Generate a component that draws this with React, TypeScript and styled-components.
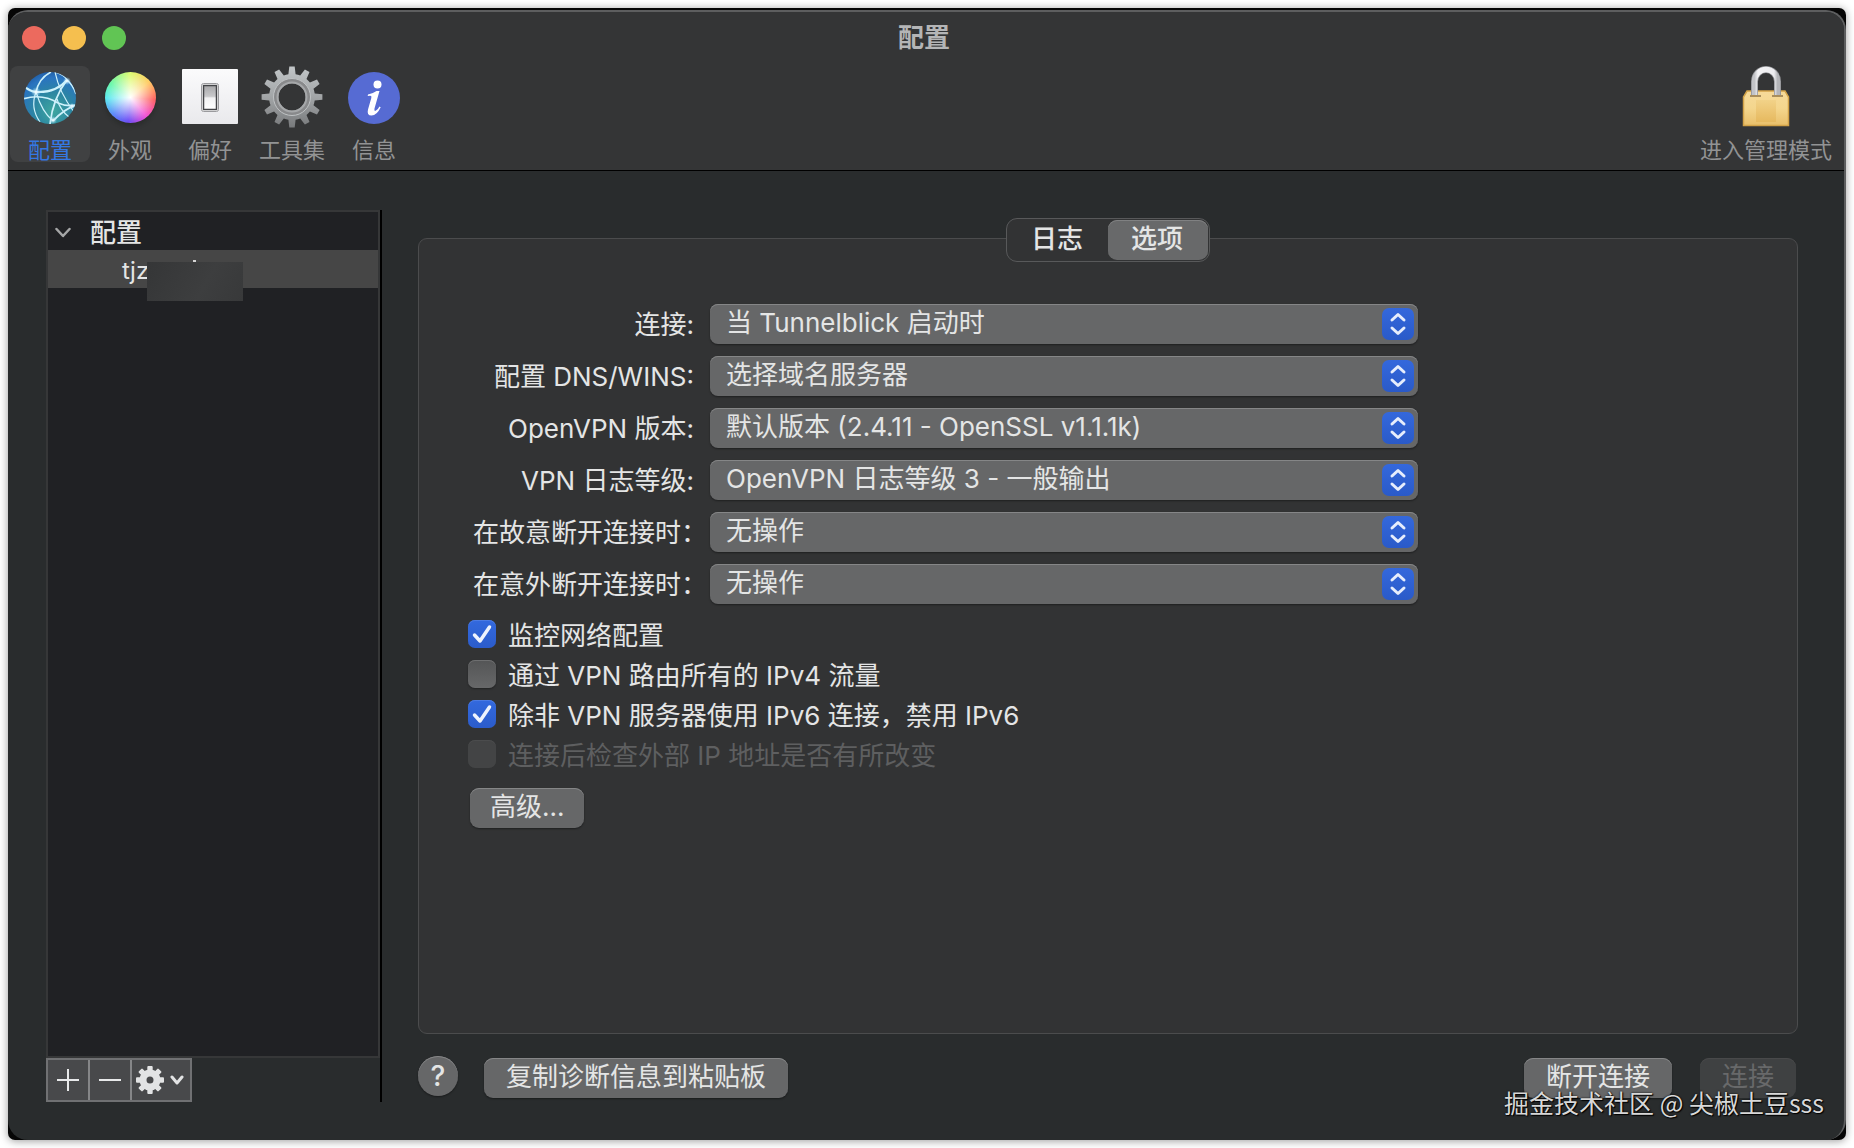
import React, { useState } from "react";
import styled, { createGlobalStyle, css } from "styled-components";

const GlobalStyle = createGlobalStyle`
  *, *::before, *::after { box-sizing: border-box; }
  body {
    margin: 0;
    background: #fff;
    font-family: Inter, "Noto Sans CJK SC", sans-serif;
    font-size: 26px;
    line-height: 36px;
    color: #e4e5e5;
  }
  button, select, input { font: inherit; color: inherit; }
`;

const Page = styled.div`
  display: flex;
  min-height: 100vh;
  padding: 8px;
`;

const Backdrop = styled.div`
  display: flex;
  flex: 1;
  position: relative;
  padding-top: 2px;
  border-radius: 7px;
  background: #060606;
  box-shadow: 0 1px 8px rgba(0, 0, 0, 0.4);
`;

const Window = styled.div`
  display: flex;
  flex-direction: column;
  flex: 1;
  min-width: 0;
  border: 0 solid #5d5e5f;
  border-width: 2px 2px 0 0;
  border-radius: 20px;
  background: #292c2d;
  overflow: hidden;
`;

const Header = styled.header`
  padding-bottom: 8px;
  border-bottom: 1px solid #000;
  background: #343536;
`;

const TitleBar = styled.div`
  display: grid;
  grid-template-columns: 1fr auto 1fr;
  align-items: center;
  height: 52px;
  margin-bottom: 2px;
  padding: 0 18px 0 14px;
`;

const TrafficLights = styled.div`
  display: flex;
  gap: 16px;
`;

const Light = styled.button<{ $color: string }>`
  width: 24px;
  height: 24px;
  padding: 0;
  border: 0;
  border-radius: 50%;
  background: ${(p) => p.$color};
`;

const Title = styled.h1`
  margin: 0;
  font-size: 26px;
  font-weight: 600;
  line-height: 52px;
  color: #b4b5b6;
`;

const Toolbar = styled.nav`
  display: flex;
  padding: 0 2px;
`;

const ToolItem = styled.button<{ $active?: boolean; $wide?: boolean; $end?: boolean }>`
  display: flex;
  flex-direction: column;
  align-items: center;
  gap: 14px;
  width: ${(p) => (p.$wide ? 84 : 80)}px;
  height: 96px;
  padding: 0;
  border: 0;
  border-radius: 8px;
  background: ${(p) => (p.$active ? "#404142" : "transparent")};
  color: ${(p) => (p.$active ? "#3478e4" : "#929394")};
  font-size: 22px;
  line-height: 24px;
  white-space: nowrap;
  ${(p) =>
    p.$end &&
    css`
      width: auto;
      margin-left: auto;
      padding-right: 10px;
    `}
  svg {
    flex: none;
  }
`;

const Body = styled.div`
  display: flex;
  flex: 1;
  gap: 36px;
  padding: 39px 46px 38px 38px;
`;

const Sidebar = styled.aside`
  display: flex;
  flex-direction: column;
  flex: none;
  width: 336px;
  border-right: 2px solid #000;
`;

const Tree = styled.ul`
  flex: 1;
  margin: 0;
  padding: 0;
  list-style: none;
  border: 2px solid #363738;
  background: #202124;
`;

const TreeHeader = styled.li`
  display: flex;
  align-items: center;
  gap: 19px;
  height: 38px;
  padding: 3px 0 0 7px;
  font-weight: 500;
`;

const TreeRow = styled.li`
  position: relative;
  height: 38px;
  padding-left: 74px;
  background: #464646;
  font-size: 24px;
  line-height: 42px;
`;

const Mask = styled.span`
  position: absolute;
  top: 12px;
  left: 99px;
  width: 96px;
  height: 39px;
  background: linear-gradient(120deg, #353637, #3d3e3f 60%, #38393a);
  &::before {
    content: "";
    position: absolute;
    top: -2px;
    left: 46px;
    width: 3px;
    height: 2px;
    background: #d5d5d5;
  }
`;

const ListActions = styled.div`
  display: flex;
  width: 146px;
  height: 44px;
  border: 2px solid #707173;
  background: #48494b;
`;

const ListButton = styled.button`
  display: flex;
  align-items: center;
  justify-content: center;
  gap: 6px;
  flex: 0 0 42px;
  padding: 0;
  border: 0;
  border-right: 2px solid #858688;
  background: transparent;
  &:last-child {
    flex: 1;
    padding-right: 2px;
    border-right: 0;
  }
`;

const Main = styled.main`
  display: flex;
  flex-direction: column;
  flex: 1;
  min-width: 0;
  padding: 8px 0 4px;
`;

const Tabs = styled.div`
  display: flex;
  position: relative;
  z-index: 1;
  align-self: center;
  height: 44px;
  padding: 1px;
  border: 1px solid #58595a;
  border-radius: 11px;
  background: #323334;
`;

const Tab = styled.button<{ $active: boolean }>`
  width: 100px;
  padding: 0 2px 2px 0;
  border: 0;
  border-radius: 9px;
  font-weight: 500;
  background: ${(p) => (p.$active ? "#68696a" : "transparent")};
  box-shadow: ${(p) => (p.$active ? "inset 0 1px #808182" : "none")};
`;

const Panel = styled.section`
  flex: 1;
  margin-top: -24px;
  padding: 65px 48px 40px 49px;
  border: 1px solid #4b4c4d;
  border-radius: 9px;
  background: #323334;
`;

const Fields = styled.div`
  display: grid;
  grid-template-columns: 226px minmax(0, 708px);
  gap: 12px 16px;
`;

const FieldLabel = styled.label`
  height: 40px;
  padding-top: 1px;
  line-height: 40px;
  text-align: right;
  white-space: nowrap;
  font-feature-settings: "halt";
`;

const SelectBox = styled.div`
  display: grid;
  align-items: center;
  > * {
    grid-area: 1 / 1;
  }
`;

const raised = css`
  border: 0;
  background: #666768;
  box-shadow: inset 0 1px #858687, 0 1px 2px rgba(0, 0, 0, 0.4);
`;

const Select = styled.select`
  ${raised}
  appearance: none;
  width: 100%;
  height: 40px;
  padding: 0 44px 2px 16px;
  border-radius: 8px;
  line-height: 36px;
`;

const Stepper = styled.svg`
  justify-self: end;
  margin-right: 4px;
  border-radius: 7px;
  background: linear-gradient(#3468dc, #2a5ac8);
  pointer-events: none;
`;

const Checks = styled.div`
  display: flex;
  flex-direction: column;
  align-items: flex-start;
  margin-top: 10px;
`;

const CheckRow = styled.label<{ $disabled?: boolean }>`
  display: flex;
  align-items: center;
  gap: 12px;
  height: 40px;
  color: ${(p) => (p.$disabled ? "#5e5f60" : "inherit")};
`;

const CheckBox = styled.span`
  display: grid;
  > * {
    grid-area: 1 / 1;
  }
  svg {
    visibility: hidden;
    pointer-events: none;
  }
  input:checked + svg {
    visibility: visible;
  }
`;

const CheckInput = styled.input`
  appearance: none;
  width: 28px;
  height: 28px;
  margin: 0;
  border-radius: 7px;
  background: linear-gradient(#545556, #676869);
  box-shadow: inset 0 1px #6e6f70, 0 1px 2px rgba(0, 0, 0, 0.35);
  &:checked {
    background: linear-gradient(#3369de, #2b5ccb);
    box-shadow: inset 0 1px #4c7be2;
  }
  &:disabled {
    background: #434445;
    box-shadow: inset 0 1px #4b4c4d;
  }
`;

const CheckText = styled.span`
  padding-top: 4px;
`;

const PushButton = styled.button<{ $compact?: boolean }>`
  ${raised}
  height: 40px;
  padding: 0 ${(p) => (p.$compact ? 20 : 22)}px 2px;
  border-radius: 9px;
  white-space: nowrap;
  &:disabled {
    background: #3f4142;
    box-shadow: inset 0 1px #48494a;
    color: #68696a;
  }
`;

const AdvancedRow = styled.div`
  display: flex;
  padding: 14px 2px 0;
`;

const Footer = styled.footer`
  display: flex;
  align-items: flex-end;
  gap: 26px;
  height: 64px;
`;

const HelpButton = styled.button`
  ${raised}
  width: 40px;
  height: 40px;
  margin-bottom: 2px;
  padding: 0;
  border-radius: 50%;
  font-size: 28px;
  font-weight: 500;
  line-height: 40px;
`;

const ConnectGroup = styled.div`
  display: flex;
  gap: 28px;
  margin-left: auto;
  padding-right: 2px;
`;

const Watermark = styled.div`
  position: absolute;
  right: 22px;
  bottom: 20px;
  font-family: "Noto Sans CJK SC", sans-serif;
  font-size: 25px;
  line-height: 36px;
  color: #d8d8d8;
  text-shadow: 1px 1px 1px #000, 0 0 2px #000;
  pointer-events: none;
`;

const GlobeIcon = () => (
  <svg width="56" height="58" viewBox="0 0 56 58" aria-hidden="true">
    <defs>
      <radialGradient id="globe" cx="0.56" cy="0.75" r="0.8">
        <stop offset="0" stopColor="#3fa79f" />
        <stop offset="0.45" stopColor="#2c86a2" />
        <stop offset="0.8" stopColor="#2a74c0" />
        <stop offset="1" stopColor="#1f5aa2" />
      </radialGradient>
      <radialGradient id="spark">
        <stop offset="0" stopColor="#fff" />
        <stop offset="1" stopColor="#a5e4ff" stopOpacity="0" />
      </radialGradient>
      <clipPath id="globeClip"><circle cx="28" cy="32" r="26" /></clipPath>
    </defs>
    <circle cx="28" cy="32" r="26" fill="url(#globe)" />
    <g clipPath="url(#globeClip)" fill="none" stroke="#cdf1fb" strokeWidth="1.2">
      <path d="M2 20Q7 25 14 26Q34 27 45 14" strokeWidth="2" />
      <path d="M14 26Q17 12 29 6" strokeWidth="1.6" />
      <path d="M14 26Q8 42 18 56" />
      <path d="M14 26Q20 46 31 55" />
      <path d="M33 6Q43 9 45 14Q51 19 54 28" strokeWidth="1.6" />
      <path d="M33 6Q37 26 52 46" />
      <path d="M45 14Q31 32 28 58" strokeWidth="1.8" />
      <path d="M1 33Q20 27 36 37Q45 41 55 39" strokeWidth="1.6" />
      <path d="M55 39Q42 43 31 55" strokeWidth="1.8" />
      <path d="M35 33Q38 44 47 51" />
    </g>
    <circle cx="14" cy="26" r="5" fill="url(#spark)" />
    <circle cx="45" cy="15" r="4" fill="url(#spark)" />
    <circle cx="31" cy="54" r="4" fill="url(#spark)" />
    <circle cx="50" cy="40" r="3" fill="url(#spark)" />
  </svg>
);

const WheelSlot = styled.span`
  display: flex;
  align-items: center;
  justify-content: center;
  height: 58px;
  padding-top: 5px;
`;

const Wheel = styled.span`
  width: 51px;
  height: 51px;
  border-radius: 50%;
  background:
    radial-gradient(circle, #fff 0, rgba(255, 255, 255, 0.6) 30%, rgba(255, 255, 255, 0.12) 66%),
    conic-gradient(#dbfa60, #ffc550 50deg, #ff4f50 95deg, #f03ed2 140deg, #5a36f4 185deg, #4878f8 225deg, #48e6ee 268deg, #58f7a0 305deg, #dbfa60);
  box-shadow: 0 3px 4px rgba(10, 20, 10, 0.25);
`;

const SwitchIcon = () => (
  <svg width="56" height="58" viewBox="0 0 56 58" aria-hidden="true">
    <defs>
      <linearGradient id="plate" x2="0" y2="1">
        <stop offset="0" stopColor="#fbfbfc" />
        <stop offset="1" stopColor="#e9e9ec" />
      </linearGradient>
      <linearGradient id="rocker" x2="0" y2="1">
        <stop offset="0" stopColor="#a8a8aa" />
        <stop offset="0.45" stopColor="#c8c8ca" />
        <stop offset="0.52" stopColor="#f2f2f3" />
        <stop offset="1" stopColor="#fff" />
      </linearGradient>
    </defs>
    <rect y="3" width="56" height="55" rx="1" fill="url(#plate)" />
    <rect x="19.500" y="17.500" width="17" height="28" rx="2" fill="#fff" stroke="#9b9b9e" />
    <rect x="21.500" y="19.500" width="13" height="24" fill="url(#rocker)" stroke="#444548" strokeWidth="1.5" />
  </svg>
);

const GearIcon = () => (
  <svg width="62" height="62" viewBox="-31 -31 62 62" aria-hidden="true" style={{ marginBottom: -4 }}>
    <defs>
      <linearGradient id="gear" gradientUnits="userSpaceOnUse" x1="0" y1="-31" x2="0" y2="31">
        <stop offset="0" stopColor="#c2c6c8" />
        <stop offset="0.5" stopColor="#a2a5a7" />
        <stop offset="1" stopColor="#77797b" />
      </linearGradient>
    </defs>
    <path
      fill="url(#gear)"
      d={
        Array.from({ length: 12 }, (_, i) => {
          const point = (deg: number, r: number) => {
            const a = ((i * 30 + deg - 90) * Math.PI) / 180;
            return `${(r * Math.cos(a)).toFixed(1)} ${(r * Math.sin(a)).toFixed(1)}`;
          };
          return `${i ? "L" : "M"}${point(-15, 23)}L${point(-9, 23)}L${point(-5, 30.5)}L${point(5, 30.5)}L${point(9, 23)}L${point(15, 23)}`;
        }).join("") + "Z"
      }
    />
    <circle r="16" fill="#343536" stroke="#88898b" strokeWidth="5" />
    <circle r="18.500" fill="none" stroke="#bfc2c4" strokeWidth="1" />
    <circle r="14.500" fill="none" stroke="#a6a8aa" strokeWidth="2" />
  </svg>
);

const InfoIcon = () => (
  <svg width="56" height="58" viewBox="0 0 56 58" aria-hidden="true">
    <circle cx="28" cy="32" r="26" fill="#566bd3" />
    <circle cx="31.500" cy="18.500" r="4" fill="#fff" />
    <path d="M22 28.500Q27 27.500 30.500 25L33.500 25L28.500 42.500Q27.800 45.800 30 44.600Q32 43.300 33.500 40.500L34.700 41.200Q30.800 49.500 25.500 49.500Q20.500 49.500 22 43.500L25.300 32Q26 29.500 24 29.700L21.700 30Z" fill="#fff" />
  </svg>
);

const LockIcon = () => (
  <svg width="48" height="62" viewBox="0 0 48 62" aria-hidden="true" style={{ marginBottom: -4 }}>
    <defs>
      <linearGradient id="brass" x2="0" y2="1">
        <stop offset="0" stopColor="#f6da9a" />
        <stop offset="0.5" stopColor="#f4d68d" />
        <stop offset="1" stopColor="#e9bf6a" />
      </linearGradient>
      <linearGradient id="core" x2="0" y2="1">
        <stop offset="0" stopColor="#f2d288" />
        <stop offset="1" stopColor="#e6b95f" />
      </linearGradient>
      <linearGradient id="steel">
        <stop offset="0" stopColor="#c3c4c8" />
        <stop offset="0.15" stopColor="#f3f3f5" />
        <stop offset="0.85" stopColor="#ececef" />
        <stop offset="1" stopColor="#b4b5b9" />
      </linearGradient>
    </defs>
    <path d="M5 25H43L46.500 31V59.500H1.500V31Z" fill="url(#brass)" stroke="#d3a348" strokeWidth="1.5" />
    <rect x="14" y="34" width="20" height="22" fill="url(#core)" />
    <path d="M8 30H19M30 30H41" stroke="#a98e5c" strokeWidth="2" />
    <path d="M12.500 29V15.500A11.500 12 0 0 1 35.500 15.500V29" fill="none" stroke="#8f9094" strokeWidth="7" />
    <path d="M12.500 29V15.500A11.500 12 0 0 1 35.500 15.500V29" fill="none" stroke="url(#steel)" strokeWidth="5.500" />
  </svg>
);

const fields = [
  { id: "connect", label: "连接:", value: "当 Tunnelblick 启动时" },
  { id: "dns", label: "配置 DNS/WINS:", value: "选择域名服务器" },
  { id: "version", label: "OpenVPN 版本:", value: "默认版本 (2.4.11 - OpenSSL v1.1.1k)" },
  { id: "log", label: "VPN 日志等级:", value: "OpenVPN 日志等级 3 - 一般输出" },
  { id: "expected", label: "在故意断开连接时：", value: "无操作" },
  { id: "unexpected", label: "在意外断开连接时：", value: "无操作" },
];

const checks = [
  { label: "监控网络配置", checked: true },
  { label: "通过 VPN 路由所有的 IPv4 流量", checked: false },
  { label: "除非 VPN 服务器使用 IPv6 连接，禁用 IPv6", checked: true },
  { label: "连接后检查外部 IP 地址是否有所改变", checked: false, disabled: true },
];

export default function App() {
  const [tab, setTab] = useState("选项");
  return (
    <>
      <GlobalStyle />
      <Page>
        <Backdrop>
          <Window>
            <Header>
              <TitleBar>
                <TrafficLights>
                  <Light $color="#ec6a5e" aria-label="关闭" />
                  <Light $color="#f5bf4f" aria-label="最小化" />
                  <Light $color="#61c554" aria-label="缩放" />
                </TrafficLights>
                <Title>配置</Title>
              </TitleBar>
              <Toolbar>
                <ToolItem $active><GlobeIcon />配置</ToolItem>
                <ToolItem><WheelSlot><Wheel /></WheelSlot>外观</ToolItem>
                <ToolItem><SwitchIcon />偏好</ToolItem>
                <ToolItem $wide><GearIcon />工具集</ToolItem>
                <ToolItem><InfoIcon />信息</ToolItem>
                <ToolItem $end><LockIcon />进入管理模式</ToolItem>
              </Toolbar>
            </Header>
            <Body>
              <Sidebar>
                <Tree>
                  <TreeHeader>
                    <svg width="16" height="12" viewBox="0 0 16 12" fill="none" stroke="#a5a6a7" strokeWidth="2.500" strokeLinecap="round" strokeLinejoin="round" aria-hidden="true">
                      <path d="M1.500 2L8 9L14.500 2" />
                    </svg>
                    配置
                  </TreeHeader>
                  <TreeRow>tjz<Mask /></TreeRow>
                </Tree>
                <ListActions>
                  <ListButton aria-label="添加">
                    <svg width="22" height="22" stroke="#e8e9ea" strokeWidth="2" aria-hidden="true"><path d="M0 11H22M11 0V22" /></svg>
                  </ListButton>
                  <ListButton aria-label="删除">
                    <svg width="22" height="22" stroke="#e8e9ea" strokeWidth="2" aria-hidden="true"><path d="M0 11H22" /></svg>
                  </ListButton>
                  <ListButton aria-label="操作">
                    <svg width="28" height="28" viewBox="-14 -14 28 28" aria-hidden="true">
                      <circle r="7" fill="none" stroke="#e2e3e4" strokeWidth="7" />
                      {[0, 45, 90, 135, 180, 225, 270, 315].map((a) => (
                        <rect key={a} x="-2.700" y="-14" width="5.400" height="6" rx="1" fill="#e2e3e4" transform={`rotate(${a})`} />
                      ))}
                    </svg>
                    <svg width="14" height="10" fill="none" stroke="#e2e3e4" strokeWidth="3" strokeLinecap="round" strokeLinejoin="round" aria-hidden="true">
                      <path d="M2 2L7 8L12 2" />
                    </svg>
                  </ListButton>
                </ListActions>
              </Sidebar>
              <Main>
                <Tabs role="tablist">
                  {["日志", "选项"].map((name) => (
                    <Tab key={name} role="tab" aria-selected={tab === name} $active={tab === name} onClick={() => setTab(name)}>
                      {name}
                    </Tab>
                  ))}
                </Tabs>
                <Panel>
                  <Fields>
                    {fields.map((f) => (
                      <React.Fragment key={f.id}>
                        <FieldLabel htmlFor={f.id}>{f.label}</FieldLabel>
                        <SelectBox>
                          <Select id={f.id}>
                            <option>{f.value}</option>
                          </Select>
                          <Stepper width="32" height="32" viewBox="0 0 32 32" fill="none" stroke="#e6edfc" strokeWidth="3" strokeLinecap="round" strokeLinejoin="round" aria-hidden="true">
                            <path d="M10 12L16 6.500L22 12M10 20L16 25.500L22 20" />
                          </Stepper>
                        </SelectBox>
                      </React.Fragment>
                    ))}
                  </Fields>
                  <Checks>
                    {checks.map((c) => (
                      <CheckRow key={c.label} $disabled={c.disabled}>
                        <CheckBox>
                          <CheckInput type="checkbox" defaultChecked={c.checked} disabled={c.disabled} />
                          <svg width="28" height="28" fill="none" stroke="#eef3fd" strokeWidth="3.500" strokeLinecap="round" strokeLinejoin="round" aria-hidden="true">
                            <path d="M6.500 15L12 21L21.500 7" />
                          </svg>
                        </CheckBox>
                        <CheckText>{c.label}</CheckText>
                      </CheckRow>
                    ))}
                  </Checks>
                  <AdvancedRow>
                    <PushButton $compact>高级...</PushButton>
                  </AdvancedRow>
                </Panel>
                <Footer>
                  <HelpButton aria-label="帮助">?</HelpButton>
                  <PushButton>复制诊断信息到粘贴板</PushButton>
                  <ConnectGroup>
                    <PushButton>断开连接</PushButton>
                    <PushButton disabled>连接</PushButton>
                  </ConnectGroup>
                </Footer>
              </Main>
            </Body>
          </Window>
          <Watermark>掘金技术社区 @ 尖椒土豆sss</Watermark>
        </Backdrop>
      </Page>
    </>
  );
}
